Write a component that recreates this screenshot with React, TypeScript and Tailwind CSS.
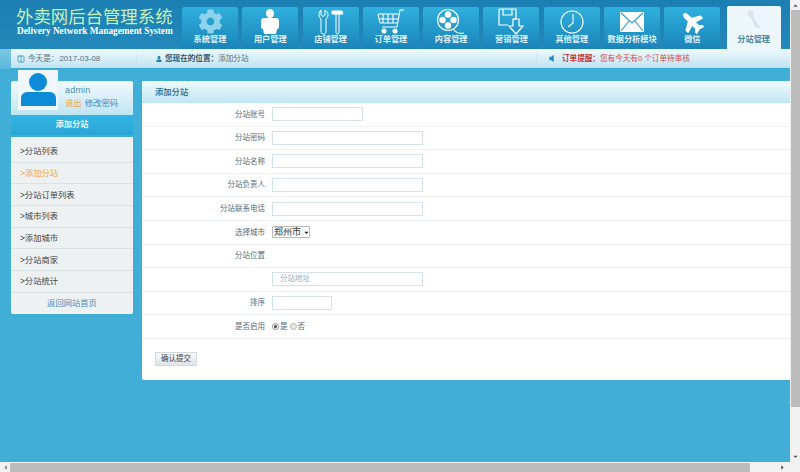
import { Columns2 } from 'lucide-react';
import { FaPlane, FaUser, FaCog, FaCaretDown, FaCaretUp, FaCaretLeft, FaCaretRight, FaVolumeOff } from 'react-icons/fa';

const FONT = "font-['Liberation_Sans','Noto_Sans_CJK_SC',sans-serif]";

const Torso = () => (
  <svg width="18" height="25" viewBox="0 0 18 25" fill="white">
    <ellipse cx="9" cy="4.5" rx="4" ry="4.5" />
    <path d="M3 9h12c2 0 3 1 3 3v6c0 1-1 2-2 2l-1 5H3l-1-5c-1 0-2-1-2-2v-6c0-2 1-3 3-3z" />
  </svg>
);

const Tools = () => (
  <svg width="26" height="26" viewBox="0 0 26 26" fill="none" stroke="white" strokeWidth="1">
    <path d="M3 1v5l2 1.500 2-1.500V1c2 1 3 3 3 5 0 2-1 3-2 4v13c0 1-1 2-2 2h-1c-1 0-2-1-2-2V10C2 9 1 8 1 6c0-2 .8-4 2-5z" />
    <path d="M14 2h10l1 3H14z" fill="white" />
    <path d="M18 5v19c0 1 3 1 3 0V5" />
  </svg>
);

const Cart = () => (
  <svg width="28" height="26" viewBox="0 0 28 26" fill="none" stroke="white" strokeWidth="1.1">
    <path d="M27 1h-4l-3 17H5" />
    <path d="M1 5h21M2 10h19M3 14h17M6 5v9M11 5v9M16 5v9M1 5l2 9" />
    <circle cx="7" cy="22" r="2" fill="white" />
    <circle cx="18" cy="22" r="2" fill="white" />
  </svg>
);

const FilmReel = () => (
  <svg width="30" height="28" viewBox="0 0 30 28" fill="none" stroke="white" strokeWidth="1.2">
    <circle cx="12" cy="12" r="10.500" />
    <circle cx="12" cy="6.500" r="2.600" fill="white" />
    <circle cx="12" cy="17.500" r="2.600" fill="white" />
    <circle cx="6.500" cy="12" r="2.600" fill="white" />
    <circle cx="17.500" cy="12" r="2.600" fill="white" />
    <path d="M17 21c3 4 7 5 11 4" />
  </svg>
);

const Floppy = () => (
  <svg width="26" height="28" viewBox="0 0 26 28" fill="none" stroke="white" strokeWidth="1.2">
    <path d="M1 1h17v10h-3M10 17H1V1" />
    <path d="M5 1v6h9V1" />
    <path d="M15 11v7h-4l7 8 7-8h-4v-7z" />
  </svg>
);

const ClockFace = () => (
  <svg width="24" height="24" viewBox="0 0 24 24" fill="none" stroke="white" strokeWidth="1.1">
    <circle cx="12" cy="12" r="11" />
    <path d="M13 4v9l-5 4" />
  </svg>
);

const Envelope = () => (
  <svg width="24" height="22" viewBox="0 0 24 22" fill="white">
    <rect x="0" y="1" width="24" height="20" />
    <path d="M1 2l11 10L23 2M1 20l8-10M23 20l-8-10" fill="none" stroke="#2f9fd0" strokeWidth="1.2" />
  </svg>
);

const Pin = () => (
  <svg width="18" height="20" viewBox="0 0 22 24" fill="#d9e5ea">
    <path d="M3 2c3-2 6-1 8 0l-1 5 6 10c2 1 3 3 2 5-3 0-5 0-6-2L7 9 3 7z" />
  </svg>
);

const tabs = [
  { label: '系统管理', icon: <FaCog size={25} color="#8ed2ec" /> },
  { label: '用户管理', icon: <Torso /> },
  { label: '店铺管理', icon: <Tools /> },
  { label: '订单管理', icon: <Cart /> },
  { label: '内容管理', icon: <FilmReel /> },
  { label: '营销管理', icon: <Floppy /> },
  { label: '其他管理', icon: <ClockFace /> },
  { label: '数据分析模块', icon: <Envelope /> },
  { label: '微信', icon: <FaPlane size={24} color="white" className="-rotate-[135deg]" /> },
];

const menu = ['分站列表', '添加分站', '分站订单列表', '城市列表', '添加城市', '分站商家', '分站统计'];

const Row = ({ label, children }: { label?: string; children?: React.ReactNode }) => (
  <div className="h-[23.6px] flex items-center border-b border-[#eef1f2]">
    <div className="w-[123px] text-right text-[7.5px] text-[#5a6b78]">{label}</div>
    <div className="ml-[7px] flex items-center">{children}</div>
  </div>
);

const Field = ({ w, placeholder }: { w: string; placeholder?: string }) => (
  <div className={`${w} h-[14px] border border-[#d3e3ea] bg-white text-[7.5px] text-[#a5adb2] pl-[7px] leading-[12px]`}>
    {placeholder}
  </div>
);

export default function App() {
  return (
    <div className={`${FONT} relative w-[800px] h-[472px] overflow-hidden bg-[#40aed6]`}>
      <div className="h-[49px] w-[790px] bg-gradient-to-b from-[#1b7fb4] to-[#2388ba] flex">
        <div className="w-[182px] pl-[16px] pt-[7px]">
          <div className="text-[17.4px] leading-[20px] whitespace-nowrap text-[#c8f0b8]">外卖网后台管理系统</div>
          <div className="font-['Liberation_Serif',serif] font-bold text-[9.3px] leading-[10px] -mt-[1px] ml-[1px] text-white whitespace-nowrap">
            Delivery Network Management System
          </div>
        </div>
        <div className="flex items-end gap-[4.3px]">
          {tabs.map(t => (
            <div key={t.label} className="w-[56px] h-[42px] rounded-t-[2px] bg-gradient-to-b from-[#2fb0de] to-[#1a84b9] flex flex-col items-center">
              <div className="h-[28px] flex items-center justify-center pt-[1px]">{t.icon}</div>
              <div className="text-[8.2px] leading-[10px] font-bold text-[#dff1f9] whitespace-nowrap">{t.label}</div>
            </div>
          ))}
          <div className="ml-[2px] w-[54px] h-[43px] rounded-t-[2px] bg-[#edf7fb] flex flex-col items-center">
            <div className="h-[28px] flex items-center justify-center"><Pin /></div>
            <div className="text-[8.2px] leading-[10px] font-bold text-[#4a86a3] whitespace-nowrap mt-[1px]">分站管理</div>
          </div>
        </div>
      </div>

      <div className="w-[790px] h-[20px] pl-[11px] bg-gradient-to-b from-[#7cc6e2] to-[#5ab8dc]">
        <div className="h-[20px] flex items-center bg-gradient-to-b from-[#f0fafd] to-[#bde3f1] text-[7.6px] text-[#55707f] border-b border-[#35a8d6]">
          <div className="w-[126px] h-[10px] flex items-center border-r border-[#cfe6ef]">
            <Columns2 size={8} color="#1b80b5" className="ml-[6px]" />
            <span className="ml-[3px] whitespace-nowrap">今天是：</span>
            <span className="ml-[1px] text-[8px] whitespace-nowrap">2017-03-08</span>
          </div>
          <div className="w-[400px] h-[10px] flex items-center border-r border-[#cfe6ef]">
            <FaUser size={6} color="#1b80b5" className="ml-[19px]" />
            <span className="ml-[3px] font-bold text-[#30556b] whitespace-nowrap">您现在的位置：</span>
            <span className="whitespace-nowrap">添加分站</span>
          </div>
          <FaVolumeOff size={9} color="#1a8fd0" className="ml-[10px]" />
          <span className="ml-[6px] font-bold text-[#c9353b] whitespace-nowrap">订单提醒：</span>
          <span className="text-[#d34c50] whitespace-nowrap">您有今天有0 个订单待审核</span>
        </div>
      </div>

      <div className="w-[790px] flex items-start pl-[11px] pt-[12px]">
        <aside className="w-[122px]">
          <div className="relative h-[34px] rounded-t-[2px] bg-gradient-to-b from-[#f2fafd] to-[#bfe5f3]">
            <div className="absolute left-[7px] -top-[11px] w-[40px] h-[40px] bg-[#f0f7fa] flex flex-col items-center pt-[3px]">
              <div className="w-[18px] h-[18px] rounded-full bg-[#0d8bd6]" />
              <div className="w-[35px] h-[14px] mt-[1px] rounded-t-[6px] bg-[#0d8bd6]" />
            </div>
            <div className="pl-[54px] pt-[4px]">
              <div className="text-[9px] leading-[11px] text-[#4f8fb0] tracking-[0.2px]">admin</div>
              <div className="text-[8.4px] leading-[11px] mt-[2px] whitespace-nowrap">
                <span className="text-[#eda648]">退出</span>
                <span className="ml-[3px] text-[#4a8cc0]">修改密码</span>
              </div>
            </div>
          </div>
          <div className="h-[20px] bg-gradient-to-b from-[#31b6e4] to-[#2ba5d5] flex items-center justify-center text-[8.2px] font-bold text-[#e8f6fb]">
            添加分站
          </div>
          <div className="mt-[2px] rounded-b-[2px] bg-[#edf1f2] pt-[4px]">
            {menu.map((m, i) => (
              <div key={m} className={`h-[21.7px] pl-[9px] flex items-center border-b border-[#dbe2e3] text-[8.3px] ${i === 1 ? 'text-[#eda648]' : 'text-[#444444]'}`}>
                {'>'}{m}
              </div>
            ))}
            <div className="h-[21px] flex items-center justify-center text-[8.3px] text-[#4a8cc0]">返回网站首页</div>
          </div>
        </aside>

        <main className="ml-[9px] w-[648px] h-[299px] bg-white rounded-l-[2px]">
          <div className="h-[22px] pl-[13px] flex items-center bg-gradient-to-b from-[#f0fafd] to-[#bfe6f3] text-[8.3px] font-bold text-[#3a7f9f]">
            添加分站
          </div>
          <div>
            <Row label="分站账号"><Field w="w-[91px]" /></Row>
            <Row label="分站密码"><Field w="w-[151px]" /></Row>
            <Row label="分站名称"><Field w="w-[151px]" /></Row>
            <Row label="分站负责人"><Field w="w-[151px]" /></Row>
            <Row label="分站联系电话"><Field w="w-[151px]" /></Row>
            <Row label="选择城市">
              <div className="w-[38px] h-[12px] border border-[#b9b9b9] rounded-[1px] bg-white flex items-center pl-[1px] text-[9px] text-[#333333] whitespace-nowrap">
                郑州市
                <FaCaretDown size={7} color="#222222" className="ml-[3px]" />
              </div>
            </Row>
            <Row label="分站位置" />
            <Row><Field w="w-[151px]" placeholder="分站地址" /></Row>
            <Row label="排序"><Field w="w-[60px]" /></Row>
            <Row label="是否启用">
              <div className="flex items-center text-[7.5px] text-[#5a6b78]">
                <span className="w-[7px] h-[7px] rounded-full border border-[#8f8f8f] bg-white flex items-center justify-center">
                  <span className="w-[3px] h-[3px] rounded-full bg-[#444444]" />
                </span>
                <span className="ml-[1px]">是</span>
                <span className="ml-[2px] w-[7px] h-[7px] rounded-full border border-[#b5b5b5] bg-[#e6e6e6]" />
                <span className="ml-[1px]">否</span>
              </div>
            </Row>
            <div className="ml-[13px] mt-[13px] w-[42px] h-[14px] border border-[#d5dadd] bg-gradient-to-b from-[#f6f8f9] to-[#dfe5e8] flex items-center justify-center text-[7.5px] text-[#444444]">
              确认提交
            </div>
          </div>
        </main>
      </div>

      <div className="absolute right-0 top-0 w-[10px] h-[462px] bg-[#f1f1f1] flex flex-col items-center">
        <FaCaretUp size={7} color="#666666" className="mt-[2px]" />
        <div className="mt-[1px] w-[9px] h-[397px] bg-[#bcbcbc]" />
        <FaCaretDown size={7} color="#555555" className="mt-auto mb-[2px]" />
      </div>
      <div className="absolute left-0 right-0 bottom-0 h-[10px] bg-[#f1f1f1] flex items-center">
        <FaCaretLeft size={7} color="#888888" className="ml-[2px]" />
        <div className="ml-[1px] w-[740px] h-[9px] bg-[#bcbcbc]" />
        <FaCaretRight size={7} color="#555555" className="ml-[29px]" />
      </div>
    </div>
  );
}
